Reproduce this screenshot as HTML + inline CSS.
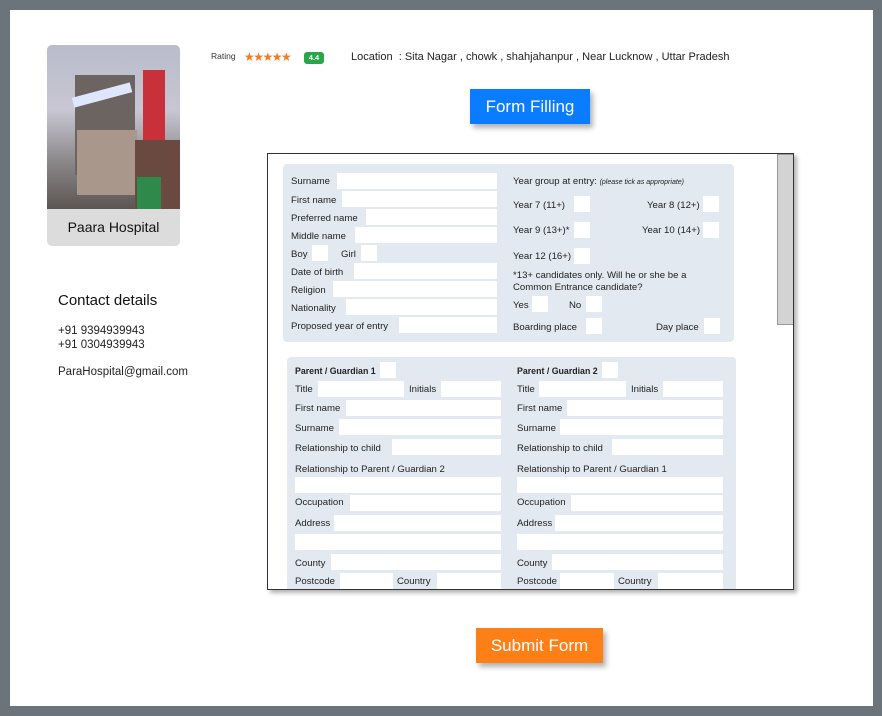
<!DOCTYPE html>
<html><head><meta charset="utf-8"><style>
*{margin:0;padding:0;box-sizing:border-box}
body{width:882px;height:716px;background:#6b737b;position:relative;overflow:hidden;font-family:"Liberation Sans",sans-serif;color:#222}
.a{position:absolute}
.panel{left:10px;top:10px;width:863px;height:696px;background:#fff}
.l{position:absolute;font-size:9.6px;line-height:14px;color:#222;white-space:nowrap;margin-top:2px}
.f{position:absolute;background:#fff;height:16px}
.btn{position:absolute;color:#fff;font-size:17px;text-align:center;box-shadow:3px 4px 5px rgba(0,0,0,.3)}
</style></head><body>
<div class="a panel"></div>

<!-- photo card -->
<div class="a" style="left:47px;top:45px;width:133px;height:201px;border-radius:5px;background:#dcdcdc;overflow:hidden">
  <div class="a" style="left:0;top:0;width:133px;height:164px;background:linear-gradient(180deg,#b9bccb 0%,#c8c6d2 40%,#8d8a8c 70%,#5b5552 100%)"></div>
  <div class="a" style="left:28px;top:30px;width:60px;height:100px;background:#6b6460"></div>
  <div class="a" style="left:25px;top:45px;width:60px;height:10px;background:#dfe6ff;transform:rotate(-15deg)"></div>
  <div class="a" style="left:30px;top:85px;width:60px;height:65px;background:#a8978a"></div>
  <div class="a" style="left:96px;top:25px;width:22px;height:80px;background:#c8303a"></div>
  <div class="a" style="left:88px;top:95px;width:45px;height:69px;background:#6a4a40"></div>
  <div class="a" style="left:90px;top:132px;width:24px;height:32px;background:#2e8a4a"></div>
  <div class="a" style="left:0;top:164px;width:133px;height:37px;font-size:14px;line-height:37px;text-align:center;color:#111">Paara Hospital</div>
</div>

<div class="a" style="left:58px;top:292px;font-size:15px;color:#111">Contact details</div>
<div class="a" style="left:58px;top:324px;font-size:11.5px;line-height:14px;color:#222">+91 9394939943<br>+91 0304939943</div>
<div class="a" style="left:58px;top:366px;font-size:11.5px;color:#222">ParaHospital@gmail.com</div>

<!-- rating -->
<div class="a" style="left:211px;top:51px;font-size:8.5px;color:#333">Rating</div>
<div class="a" style="left:244px;top:50px;font-size:12px;color:#f47b20;letter-spacing:-1.5px">★★★★★</div>
<div class="a" style="left:304px;top:52px;width:20px;height:12px;background:#2aa64a;border-radius:3px;color:#fff;font-size:7.5px;font-weight:bold;text-align:center;line-height:12px">4.4</div>
<div class="a" style="left:351px;top:51px;font-size:11px;color:#222">Location&nbsp; : Sita Nagar , chowk , shahjahanpur , Near Lucknow , Uttar Pradesh</div>

<div class="btn" style="left:470px;top:89px;width:120px;height:35px;line-height:35px;background:#0a7cff">Form Filling</div>
<div class="btn" style="left:476px;top:628px;width:127px;height:35px;line-height:35px;background:#ff7f17">Submit Form</div>

<!-- form frame -->
<div class="a" style="left:267px;top:153px;width:527px;height:437px;border:1px solid #333;background:#fff;box-shadow:3px 3px 4px rgba(0,0,0,.3);overflow:hidden">
  <div class="a" style="left:509px;top:0;width:17px;height:171px;background:#d3d3d3;border:1px solid #999"></div>
</div>

<!-- top section -->
<div class="a" style="left:283px;top:164px;width:451px;height:178px;background:#e3e9f0;border-radius:4px"></div>
<div class="l" style="left:291px;top:173px">Surname</div><div class="f" style="left:337px;top:173px;width:160px"></div>
<div class="l" style="left:291px;top:192px">First name</div><div class="f" style="left:342px;top:191px;width:155px"></div>
<div class="l" style="left:291px;top:210px">Preferred name</div><div class="f" style="left:366px;top:209px;width:131px"></div>
<div class="l" style="left:291px;top:228px">Middle name</div><div class="f" style="left:355px;top:227px;width:142px"></div>
<div class="l" style="left:291px;top:246px">Boy</div><div class="f" style="left:312px;top:245px;width:16px"></div>
<div class="l" style="left:341px;top:246px">Girl</div><div class="f" style="left:361px;top:245px;width:16px"></div>
<div class="l" style="left:291px;top:264px">Date of birth</div><div class="f" style="left:354px;top:263px;width:143px"></div>
<div class="l" style="left:291px;top:282px">Religion</div><div class="f" style="left:333px;top:281px;width:164px"></div>
<div class="l" style="left:291px;top:300px">Nationality</div><div class="f" style="left:346px;top:299px;width:151px"></div>
<div class="l" style="left:291px;top:318px">Proposed year of entry</div><div class="f" style="left:399px;top:317px;width:98px"></div>

<div class="l" style="left:513px;top:173px">Year group at entry: <i style="font-size:7px">(please tick as appropriate)</i></div>
<div class="l" style="left:513px;top:197px">Year 7 (11+)</div><div class="f" style="left:574px;top:196px;width:16px"></div>
<div class="l" style="left:647px;top:197px">Year 8 (12+)</div><div class="f" style="left:703px;top:196px;width:16px"></div>
<div class="l" style="left:513px;top:222px">Year 9 (13+)*</div><div class="f" style="left:574px;top:222px;width:16px"></div>
<div class="l" style="left:642px;top:222px">Year 10 (14+)</div><div class="f" style="left:703px;top:222px;width:16px"></div>
<div class="l" style="left:513px;top:248px">Year 12 (16+)</div><div class="f" style="left:574px;top:248px;width:16px"></div>
<div class="l" style="left:513px;top:268px;line-height:12px">*13+ candidates only. Will he or she be a<br>Common Entrance candidate?</div>
<div class="l" style="left:513px;top:297px">Yes</div><div class="f" style="left:532px;top:296px;width:16px"></div>
<div class="l" style="left:569px;top:297px">No</div><div class="f" style="left:586px;top:296px;width:16px"></div>
<div class="l" style="left:513px;top:319px">Boarding place</div><div class="f" style="left:586px;top:318px;width:16px"></div>
<div class="l" style="left:656px;top:319px">Day place</div><div class="f" style="left:704px;top:318px;width:16px"></div>

<!-- bottom section -->
<div class="a" style="left:287px;top:357px;width:449px;height:232px;background:#e3e9f0;border-radius:4px 4px 0 0"></div>
<div class="l" style="left:295px;top:362px;font-weight:bold;font-size:8.8px">Parent / Guardian 1</div><div class="f" style="left:380px;top:362px;width:16px"></div>
<div class="l" style="left:517px;top:362px;font-weight:bold;font-size:8.8px">Parent / Guardian 2</div><div class="f" style="left:602px;top:362px;width:16px"></div>

<div class="l" style="left:295px;top:381px">Title</div><div class="f" style="left:318px;top:381px;width:86px"></div>
<div class="l" style="left:409px;top:381px">Initials</div><div class="f" style="left:441px;top:381px;width:60px"></div>
<div class="l" style="left:517px;top:381px">Title</div><div class="f" style="left:539px;top:381px;width:87px"></div>
<div class="l" style="left:631px;top:381px">Initials</div><div class="f" style="left:663px;top:381px;width:60px"></div>

<div class="l" style="left:295px;top:400px">First name</div><div class="f" style="left:346px;top:400px;width:155px"></div>
<div class="l" style="left:517px;top:400px">First name</div><div class="f" style="left:567px;top:400px;width:156px"></div>
<div class="l" style="left:295px;top:420px">Surname</div><div class="f" style="left:339px;top:419px;width:162px"></div>
<div class="l" style="left:517px;top:420px">Surname</div><div class="f" style="left:560px;top:419px;width:163px"></div>
<div class="l" style="left:295px;top:440px">Relationship to child</div><div class="f" style="left:392px;top:439px;width:109px"></div>
<div class="l" style="left:517px;top:440px">Relationship to child</div><div class="f" style="left:612px;top:439px;width:111px"></div>
<div class="l" style="left:295px;top:461px">Relationship to Parent / Guardian 2</div>
<div class="l" style="left:517px;top:461px">Relationship to Parent / Guardian 1</div>
<div class="f" style="left:295px;top:477px;width:206px"></div><div class="f" style="left:517px;top:477px;width:206px"></div>
<div class="l" style="left:295px;top:494px">Occupation</div><div class="f" style="left:350px;top:495px;width:151px"></div>
<div class="l" style="left:517px;top:494px">Occupation</div><div class="f" style="left:571px;top:495px;width:152px"></div>
<div class="l" style="left:295px;top:515px">Address</div><div class="f" style="left:334px;top:515px;width:167px"></div>
<div class="l" style="left:517px;top:515px">Address</div><div class="f" style="left:555px;top:515px;width:168px"></div>
<div class="f" style="left:295px;top:534px;width:206px"></div><div class="f" style="left:517px;top:534px;width:206px"></div>
<div class="l" style="left:295px;top:555px">County</div><div class="f" style="left:331px;top:554px;width:170px"></div>
<div class="l" style="left:517px;top:555px">County</div><div class="f" style="left:552px;top:554px;width:171px"></div>
<div class="l" style="left:295px;top:573px">Postcode</div><div class="f" style="left:340px;top:573px;width:53px"></div>
<div class="l" style="left:397px;top:573px">Country</div><div class="f" style="left:437px;top:573px;width:64px"></div>
<div class="l" style="left:517px;top:573px">Postcode</div><div class="f" style="left:560px;top:573px;width:54px"></div>
<div class="l" style="left:618px;top:573px">Country</div><div class="f" style="left:658px;top:573px;width:65px"></div>
<div class="a" style="left:267px;top:589px;width:527px;height:1px;background:#333"></div>
</body></html>
